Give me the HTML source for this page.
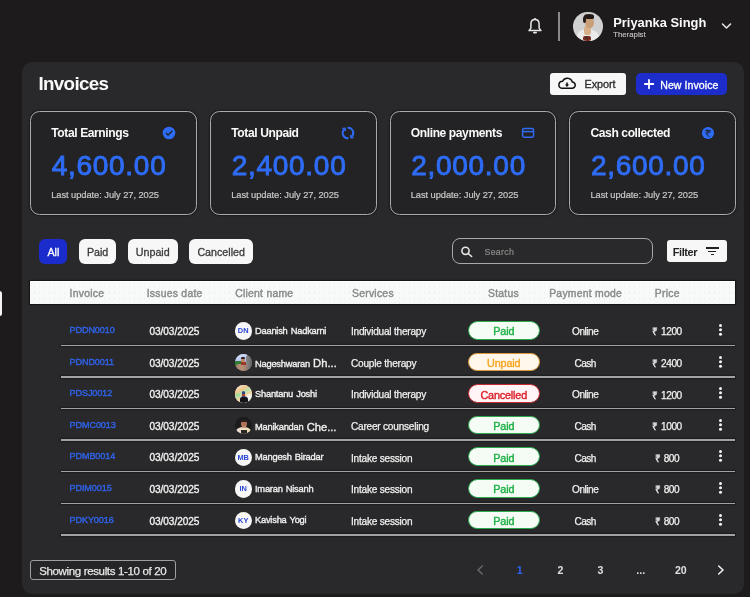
<!DOCTYPE html>
<html><head><meta charset="utf-8">
<style>
*{margin:0;padding:0;box-sizing:border-box}
html,body{width:750px;height:597px;overflow:hidden;background:#1d1b1c;font-family:"Liberation Sans",sans-serif;color:#fff}
#root{position:absolute;left:0;top:0;width:750px;height:597px;will-change:transform;background:#1d1b1c}
.a{position:absolute}
.t{position:absolute;white-space:nowrap;line-height:1}
#panel{left:22px;top:62px;width:722.2px;height:531.5px;background:#29282a;border-radius:10px}
.card{position:absolute;top:111.4px;width:166.5px;height:103.4px;border:1.8px solid #a9a9b2;border-radius:9.5px;background:#232224;box-shadow:0 0 1.5px 1px rgba(0,0,0,0.35)}
.ch{font-size:12.1px;font-weight:bold;letter-spacing:-0.42px;color:#fafafa;top:127.2px}
.cn{font-size:28px;letter-spacing:0.72px;color:#2e6cf6;top:151.8px;-webkit-text-stroke:0.9px #2e6cf6}
.cu{font-size:9.3px;letter-spacing:-0.05px;color:#c8c8c8;top:190.6px;-webkit-text-stroke:0.2px #c8c8c8}
.pill{position:absolute;height:25.3px;top:238.6px;border-radius:6px;background:#f7f7f7}
.pt{font-size:10.7px;letter-spacing:0px;color:#3a3a3a;top:246.6px;-webkit-text-stroke:0.3px currentColor}
.hd{position:absolute;top:281.2px;left:30.2px;width:705px;height:22.6px;background:radial-gradient(circle,#ebeff1 0.5px,transparent 0.9px) 2px 2.5px/5px 5.5px,#f8f9f9;border-top:1.2px solid #fff;box-shadow:0 0 1px 1px rgba(0,0,0,0.45)}
.hl{font-size:10.4px;letter-spacing:0.25px;color:#8a8a8a;top:288.8px;-webkit-text-stroke:0.42px #8a8a8a}
.row{position:absolute;left:60.5px;width:674.6px;height:1.4px;background:#a2a2a2;box-shadow:0 0 1.5px 1px rgba(0,0,0,0.3)}
.c{position:absolute;font-size:10.1px;white-space:nowrap;line-height:1;color:#f0f0f0;-webkit-text-stroke:0.25px #f0f0f0}
.id{color:#2f62e6;-webkit-text-stroke:0.4px #2f62e6}
.st{position:absolute;left:468px;width:71.5px;height:18.6px;border-radius:10px;border:1.1px solid}
.stt{position:absolute;font-size:10.8px;white-space:nowrap;line-height:1;-webkit-text-stroke:0.4px currentColor;letter-spacing:-0.15px}
.paid{background:#f5fcf6;border-color:#2aa84a}
.unpaid{background:#fff7ec;border-color:#d9983a}
.canc{background:#fff5f6;border-color:#c42a30}
.av{position:absolute;left:234.5px;width:17.4px;height:17.4px;border-radius:50%;background:#f7f7f7;color:#2a46d6;font-size:7.4px;font-weight:bold;text-align:center;line-height:17.4px;overflow:hidden}
.kb{position:absolute;left:718.8px;width:3px;height:3px;border-radius:50%;background:#f4f4f4;box-shadow:0 4.35px 0 #f4f4f4,0 8.7px 0 #f4f4f4}
.pg{position:absolute;top:564.8px;font-size:10.6px;color:#e0e0e0;font-weight:bold;line-height:1;white-space:nowrap}
</style></head><body><div id="root">
<!-- left sidebar nub -->
<div class="a" style="left:-3px;top:291px;width:5px;height:25px;background:#f4f4f4;border-radius:3px"></div>

<!-- top bar -->
<svg class="a" style="left:527px;top:17px" width="16" height="18" viewBox="0 0 16 18">
<path d="M8 2.6c-2.5 0-4.1 1.9-4.1 4.4v4.1L2 13.6h12l-1.9-2.5V7C12.1 4.5 10.5 2.6 8 2.6z" fill="none" stroke="#e8e8e8" stroke-width="1.5" stroke-linejoin="round"/>
<circle cx="8" cy="1.9" r="1" fill="#e8e8e8"/>
<path d="M6.8 15.6h2.4" stroke="#e8e8e8" stroke-width="1.6" stroke-linecap="round"/>
</svg>
<div class="a" style="left:558.2px;top:12.2px;width:1.6px;height:29px;background:#8a8a8a"></div>
<div class="a" style="left:573px;top:12.2px;width:29.5px;height:29.3px;border-radius:50%;background:radial-gradient(circle at 50% 45%,#d0d0d0 60%,#e2e2e2 100%);overflow:hidden">
  <div class="a" style="left:4px;top:16.5px;width:22px;height:15px;border-radius:45% 55% 0 0;background:#ebebeb"></div>
  <div class="a" style="left:11px;top:14px;width:6.5px;height:9px;border-radius:30% 30% 40% 40%;background:#d6b088"></div>
  <div class="a" style="left:12px;top:4.5px;width:8.5px;height:11px;border-radius:45% 45% 50% 50%;background:#c99f7a"></div>
  <div class="a" style="left:10.5px;top:2.2px;width:10px;height:4.8px;border-radius:50% 50% 20% 30%;background:#231a18"></div>
  <div class="a" style="left:10px;top:3.5px;width:3px;height:7.5px;border-radius:50%;background:#231a18"></div>
  <div class="a" style="left:10px;top:23.5px;width:7.5px;height:5.5px;border-radius:2px;background:#7a2a1e"></div>
  <div class="a" style="left:11.5px;top:24.5px;width:3px;height:2.5px;background:#2a3a2a;opacity:.6"></div>
</div>
<div class="t" style="left:613.2px;top:17.3px;font-size:12.9px;font-weight:bold;color:#fafafa">Priyanka Singh</div>
<div class="t" style="left:613.2px;top:30.6px;font-size:7.8px;color:#c2c2c2;-webkit-text-stroke:0.15px #c2c2c2">Therapist</div>
<svg class="a" style="left:721px;top:22px" width="11" height="8" viewBox="0 0 11 8"><path d="M1.5 2l4 4 4-4" fill="none" stroke="#e6e6e6" stroke-width="1.6" stroke-linecap="round" stroke-linejoin="round"/></svg>

<div id="panel" class="a"></div>
<div class="t" style="left:38.4px;top:74.6px;font-size:18.8px;font-weight:bold;letter-spacing:-0.65px;color:#fafafa">Invoices</div>

<!-- buttons -->
<div class="a" style="left:549.5px;top:72.7px;width:76px;height:22px;background:#f7f7f7;border-radius:3px"></div>
<svg class="a" style="left:557px;top:77px" width="20" height="14" viewBox="0 0 20 14">
<path d="M4.6 11.2H15A3.1 3.1 0 0 0 15.3 5A5.2 5.2 0 0 0 5.6 4.3A3.5 3.5 0 0 0 4.6 11.2Z" fill="none" stroke="#111" stroke-width="1.5" stroke-linejoin="round"/>
<path d="M10 5.6v2.6" stroke="#111" stroke-width="1.6"/>
<path d="M7.9 7.6h4.2L10 9.9z" fill="#111"/>
</svg>
<div class="t" style="left:584.5px;top:78.7px;font-size:10.9px;color:#2a2a2a;letter-spacing:-0.1px;-webkit-text-stroke:0.3px #2a2a2a">Export</div>
<div class="a" style="left:636px;top:72.9px;width:91px;height:22.1px;background:#1c2dcb;border-radius:5px"></div>
<svg class="a" style="left:643px;top:77.8px" width="12" height="12" viewBox="0 0 12 12"><path d="M6 1.9v8.4M1.9 6h8.4" stroke="#fff" stroke-width="1.8" stroke-linecap="round"/></svg>
<div class="t" style="left:660.2px;top:79.5px;font-size:10.6px;letter-spacing:0.05px;color:#fff;-webkit-text-stroke:0.3px #fff">New Invoice</div>

<!-- cards -->
<div class="card" style="left:30px"></div>
<div class="card" style="left:210px"></div>
<div class="card" style="left:389.8px"></div>
<div class="card" style="left:569.2px"></div>
<div class="t ch" style="left:51.3px">Total Earnings</div>
<div class="t cn" style="left:51.7px">4,600.00</div>
<div class="t cu" style="left:51.2px">Last update: July 27, 2025</div>
<div class="t ch" style="left:231.3px">Total Unpaid</div>
<div class="t cn" style="left:231.7px">2,400.00</div>
<div class="t cu" style="left:231.2px">Last update: July 27, 2025</div>
<div class="t ch" style="left:410.8px">Online payments</div>
<div class="t cn" style="left:411.2px">2,000.00</div>
<div class="t cu" style="left:410.7px">Last update: July 27, 2025</div>
<div class="t ch" style="left:590.5px">Cash collected</div>
<div class="t cn" style="left:590.9px">2,600.00</div>
<div class="t cu" style="left:590.4px">Last update: July 27, 2025</div>
<!-- card icons -->
<svg class="a" style="left:162px;top:126px" width="14" height="14" viewBox="0 0 14 14"><circle cx="7" cy="7" r="6.3" fill="#2e6cf6"/><path d="M4.2 7.2l1.9 1.9 3.8-3.8" fill="none" stroke="#1f1f1f" stroke-width="1.3" stroke-linecap="round" stroke-linejoin="round"/></svg>
<svg class="a" style="left:340.2px;top:125.2px" width="16" height="16" viewBox="0 0 16 16"><path d="M7.54 2.72A5.3 5.3 0 0 1 12.06 11.41M8.46 13.28A5.3 5.3 0 0 1 3.94 4.59" fill="none" stroke="#2e6cf6" stroke-width="1.9"/><path d="M13.59 12.7L10.53 10.12L10.65 13.09Z M2.41 3.3L5.47 5.88L5.35 2.91Z" fill="#2e6cf6" stroke="#2e6cf6" stroke-width="0.8" stroke-linejoin="round"/></svg>
<svg class="a" style="left:521px;top:127px" width="14" height="12" viewBox="0 0 14 12"><rect x="1.6" y="1.6" width="11" height="8.6" rx="1.6" fill="none" stroke="#2e6cf6" stroke-width="1.5"/><path d="M1.6 4.6h11" stroke="#2e6cf6" stroke-width="1.5"/></svg>
<svg class="a" style="left:701px;top:126px" width="14" height="14" viewBox="0 0 14 14"><circle cx="7" cy="7" r="6.1" fill="#2e6cf6"/><path d="M4.8 4.3h4.6M4.8 6h4.6M6 4.3c2.2 0 2.2 3.4 0 3.4h-.8l3 3" fill="none" stroke="#1f1f2a" stroke-width="1" stroke-linecap="round" stroke-linejoin="round"/></svg>

<!-- filter pills -->
<div class="pill" style="left:39.2px;width:28px;background:#1b2ccc"></div>
<div class="pill" style="left:78.5px;width:37.5px"></div>
<div class="pill" style="left:127.5px;width:50.2px"></div>
<div class="pill" style="left:189.1px;width:64px"></div>
<div class="t pt" style="left:47.4px;color:#fff">All</div>
<div class="t pt" style="left:86.9px">Paid</div>
<div class="t pt" style="left:135.8px">Unpaid</div>
<div class="t pt" style="left:197.4px">Cancelled</div>

<div class="a" style="left:452px;top:238.3px;width:201px;height:25.6px;border:1.7px solid #a8a8a8;border-radius:8px"></div>
<svg class="a" style="left:459px;top:244px" width="16" height="16" viewBox="0 0 16 16"><circle cx="6.5" cy="6.8" r="3.6" fill="none" stroke="#e6e6e6" stroke-width="1.6"/><path d="M9.2 9.5l3.4 3" stroke="#e6e6e6" stroke-width="1.6" stroke-linecap="round"/></svg>
<div class="t" style="left:484.5px;top:248.4px;font-size:8.8px;letter-spacing:0.3px;color:#8a8a8a;-webkit-text-stroke:0.2px #8a8a8a">Search</div>
<div class="a" style="left:667.3px;top:239.7px;width:59.7px;height:22.8px;background:#f7f7f7;border-radius:3px"></div>
<div class="t" style="left:672.8px;top:246.6px;font-size:10.9px;font-weight:bold;letter-spacing:-0.4px;color:#222">Filter</div>
<div class="a" style="left:705.9px;top:247.3px;width:13px;height:1.5px;background:#222"></div>
<div class="a" style="left:707.8px;top:250.5px;width:8.7px;height:1.5px;background:#222"></div>
<div class="a" style="left:710.7px;top:253.6px;width:3.2px;height:1.5px;background:#222"></div>

<!-- table header -->
<div class="hd"></div>
<div class="t hl" style="left:69.6px">Invoice</div>
<div class="t hl" style="left:146.7px">Issues date</div>
<div class="t hl" style="left:235.2px">Client name</div>
<div class="t hl" style="left:352px">Services</div>
<div class="t hl" style="left:488px">Status</div>
<div class="t hl" style="left:549.2px">Payment mode</div>
<div class="t hl" style="left:654.8px">Price</div>

<div id="rows"></div>
<div class="c id" style="left:69.5px;top:326.00px;font-size:9.1px;letter-spacing:-0.1px">PDDN0010</div>
<div class="c" style="left:149.4px;top:326.90px;letter-spacing:-0.05px;-webkit-text-stroke:0.35px #f0f0f0">03/03/2025</div>
<div class="av" style="top:322.20px">DN</div>
<div class="c" style="left:255px;top:326.60px;font-size:9.3px;letter-spacing:-0.22px;word-spacing:0.8px;-webkit-text-stroke:0.35px #f0f0f0">Daanish Nadkarni</div>
<div class="c" style="left:351px;top:327.10px;letter-spacing:-0.23px">Individual therapy</div>
<div class="st paid" style="top:321.00px"></div>
<div class="stt" style="left:503.75px;transform:translateX(-50%);top:326.40px;color:#1fb046">Paid</div>
<div class="c" style="left:585.2px;transform:translateX(-50%);top:327.10px;letter-spacing:-0.5px">Online</div>
<div class="c" style="left:667px;transform:translateX(-50%);top:327.30px;letter-spacing:-0.45px;word-spacing:1px">₹ 1200</div>
<div class="kb" style="top:324.00px"></div>
<div class="row" style="top:344.75px"></div>
<div class="c id" style="left:69.5px;top:357.60px;font-size:9.1px;letter-spacing:-0.1px">PDND0011</div>
<div class="c" style="left:149.4px;top:358.50px;letter-spacing:-0.05px;-webkit-text-stroke:0.35px #f0f0f0">03/03/2025</div>
<div class="av" style="top:353.80px;background:#7c7c7c"><div class="a" style="left:0;top:0;width:12px;height:8px;background:linear-gradient(160deg,#e4ecfc,#9cb0ec)"></div><div class="a" style="left:0;top:7px;width:7px;height:6px;background:#2f7a34"></div><div class="a" style="left:11px;top:2px;width:7px;height:16px;background:linear-gradient(90deg,#8a8a8a,#5e5e5e)"></div><div class="a" style="left:1.5px;top:10.5px;width:12px;height:8px;border-radius:3px 3px 0 0;background:linear-gradient(90deg,#a88470,#b98f74 50%,#8c7a70)"></div><div class="a" style="left:6.8px;top:4.2px;width:3.8px;height:5px;border-radius:40%;background:#c08a6c"></div><div class="a" style="left:6.4px;top:3.2px;width:4.4px;height:2.2px;border-radius:50% 50% 20% 20%;background:#231a18"></div><div class="a" style="left:6.5px;top:8.5px;width:4.5px;height:2.5px;background:#9a3a2a"></div></div>
<div class="c" style="left:255px;top:358.20px;font-size:9.3px;letter-spacing:-0.22px;word-spacing:0.8px;-webkit-text-stroke:0.35px #f0f0f0">Nageshwaran <span style="font-size:11.2px;letter-spacing:0;position:relative;top:0.3px">Dh...</span></div>
<div class="c" style="left:351px;top:358.70px;letter-spacing:-0.23px">Couple therapy</div>
<div class="st unpaid" style="top:352.60px"></div>
<div class="stt" style="left:503.75px;transform:translateX(-50%);top:358.00px;color:#f6a623">Unpaid</div>
<div class="c" style="left:585.2px;transform:translateX(-50%);top:358.70px;letter-spacing:-0.5px">Cash</div>
<div class="c" style="left:667px;transform:translateX(-50%);top:358.90px;letter-spacing:-0.45px;word-spacing:1px">₹ 2400</div>
<div class="kb" style="top:355.60px"></div>
<div class="row" style="top:376.31px"></div>
<div class="c id" style="left:69.5px;top:389.20px;font-size:9.1px;letter-spacing:-0.1px">PDSJ0012</div>
<div class="c" style="left:149.4px;top:390.10px;letter-spacing:-0.05px;-webkit-text-stroke:0.35px #f0f0f0">03/03/2025</div>
<div class="av" style="top:385.40px;background:#e8e0c8"><div class="a" style="left:0;top:0;width:18px;height:18px;background:linear-gradient(150deg,#f0f0f0 0%,#f2c88e 28%,#b8e2b0 45%,#f4d49e 58%,#eef4ee 75%,#a8dca8 100%)"></div><div class="a" style="left:7.3px;top:5.5px;width:3.6px;height:3.8px;border-radius:50%;background:#28448c"></div><div class="a" style="left:7.8px;top:8.8px;width:2.5px;height:3px;background:#b04030"></div><div class="a" style="left:5px;top:11.5px;width:8.5px;height:7px;border-radius:50% 50% 0 0;background:#141414;box-shadow:0 -0.7px 0 #2848a8"></div><div class="a" style="left:12px;top:9px;width:4px;height:4px;border-radius:50%;background:#f4f4f4;opacity:.8"></div><div class="a" style="left:1px;top:8px;width:4px;height:4px;border-radius:50%;background:#98d898;opacity:.8"></div></div>
<div class="c" style="left:255px;top:389.80px;font-size:9.3px;letter-spacing:-0.22px;word-spacing:0.8px;-webkit-text-stroke:0.35px #f0f0f0">Shantanu Joshi</div>
<div class="c" style="left:351px;top:390.30px;letter-spacing:-0.23px">Individual therapy</div>
<div class="st canc" style="top:384.20px"></div>
<div class="stt" style="left:503.75px;transform:translateX(-50%);top:389.60px;color:#dc1f2a">Cancelled</div>
<div class="c" style="left:585.2px;transform:translateX(-50%);top:390.30px;letter-spacing:-0.5px">Online</div>
<div class="c" style="left:667px;transform:translateX(-50%);top:390.50px;letter-spacing:-0.45px;word-spacing:1px">₹ 1200</div>
<div class="kb" style="top:387.20px"></div>
<div class="row" style="top:407.87px"></div>
<div class="c id" style="left:69.5px;top:420.80px;font-size:9.1px;letter-spacing:-0.1px">PDMC0013</div>
<div class="c" style="left:149.4px;top:421.70px;letter-spacing:-0.05px;-webkit-text-stroke:0.35px #f0f0f0">03/03/2025</div>
<div class="av" style="top:417.00px;background:#1c1b1c"><div class="a" style="left:1.5px;top:9.5px;width:15px;height:8px;border-radius:50% 50% 30% 30%;background:linear-gradient(90deg,#e8d8d0,#f0e0c0 60%,#e8d8a8)"></div><div class="a" style="left:6.5px;top:12.5px;width:6px;height:6px;background:#2a2826"></div><div class="a" style="left:6.5px;top:3px;width:5.5px;height:6.5px;border-radius:45%;background:#b07058"></div><div class="a" style="left:6.5px;top:2.5px;width:5.5px;height:2px;border-radius:50% 50% 0 0;background:#2a1a18"></div><div class="a" style="left:7.5px;top:8.5px;width:4px;height:2.5px;background:#c09078"></div></div>
<div class="c" style="left:255px;top:421.40px;font-size:9.3px;letter-spacing:-0.22px;word-spacing:0.8px;-webkit-text-stroke:0.35px #f0f0f0">Manikandan <span style="font-size:11.2px;letter-spacing:0;position:relative;top:0.3px">Che...</span></div>
<div class="c" style="left:351px;top:421.90px;letter-spacing:-0.23px">Career counseling</div>
<div class="st paid" style="top:415.80px"></div>
<div class="stt" style="left:503.75px;transform:translateX(-50%);top:421.20px;color:#1fb046">Paid</div>
<div class="c" style="left:585.2px;transform:translateX(-50%);top:421.90px;letter-spacing:-0.5px">Cash</div>
<div class="c" style="left:667px;transform:translateX(-50%);top:422.10px;letter-spacing:-0.45px;word-spacing:1px">₹ 1000</div>
<div class="kb" style="top:418.80px"></div>
<div class="row" style="top:439.43px"></div>
<div class="c id" style="left:69.5px;top:452.40px;font-size:9.1px;letter-spacing:-0.1px">PDMB0014</div>
<div class="c" style="left:149.4px;top:453.30px;letter-spacing:-0.05px;-webkit-text-stroke:0.35px #f0f0f0">03/03/2025</div>
<div class="av" style="top:448.60px">MB</div>
<div class="c" style="left:255px;top:453.00px;font-size:9.3px;letter-spacing:-0.22px;word-spacing:0.8px;-webkit-text-stroke:0.35px #f0f0f0">Mangesh Biradar</div>
<div class="c" style="left:351px;top:453.50px;letter-spacing:-0.23px">Intake session</div>
<div class="st paid" style="top:447.40px"></div>
<div class="stt" style="left:503.75px;transform:translateX(-50%);top:452.80px;color:#1fb046">Paid</div>
<div class="c" style="left:585.2px;transform:translateX(-50%);top:453.50px;letter-spacing:-0.5px">Cash</div>
<div class="c" style="left:667px;transform:translateX(-50%);top:453.70px;letter-spacing:-0.45px;word-spacing:1px">₹ 800</div>
<div class="kb" style="top:450.40px"></div>
<div class="row" style="top:470.99px"></div>
<div class="c id" style="left:69.5px;top:484.00px;font-size:9.1px;letter-spacing:-0.1px">PDIM0015</div>
<div class="c" style="left:149.4px;top:484.90px;letter-spacing:-0.05px;-webkit-text-stroke:0.35px #f0f0f0">03/03/2025</div>
<div class="av" style="top:480.20px">IN</div>
<div class="c" style="left:255px;top:484.60px;font-size:9.3px;letter-spacing:-0.22px;word-spacing:0.8px;-webkit-text-stroke:0.35px #f0f0f0">Imaran Nisanh</div>
<div class="c" style="left:351px;top:485.10px;letter-spacing:-0.23px">Intake session</div>
<div class="st paid" style="top:479.00px"></div>
<div class="stt" style="left:503.75px;transform:translateX(-50%);top:484.40px;color:#1fb046">Paid</div>
<div class="c" style="left:585.2px;transform:translateX(-50%);top:485.10px;letter-spacing:-0.5px">Online</div>
<div class="c" style="left:667px;transform:translateX(-50%);top:485.30px;letter-spacing:-0.45px;word-spacing:1px">₹ 800</div>
<div class="kb" style="top:482.00px"></div>
<div class="row" style="top:502.55px"></div>
<div class="c id" style="left:69.5px;top:515.60px;font-size:9.1px;letter-spacing:-0.1px">PDKY0016</div>
<div class="c" style="left:149.4px;top:516.50px;letter-spacing:-0.05px;-webkit-text-stroke:0.35px #f0f0f0">03/03/2025</div>
<div class="av" style="top:511.80px">KY</div>
<div class="c" style="left:255px;top:516.20px;font-size:9.3px;letter-spacing:-0.22px;word-spacing:0.8px;-webkit-text-stroke:0.35px #f0f0f0">Kavisha Yogi</div>
<div class="c" style="left:351px;top:516.70px;letter-spacing:-0.23px">Intake session</div>
<div class="st paid" style="top:510.60px"></div>
<div class="stt" style="left:503.75px;transform:translateX(-50%);top:516.00px;color:#1fb046">Paid</div>
<div class="c" style="left:585.2px;transform:translateX(-50%);top:516.70px;letter-spacing:-0.5px">Cash</div>
<div class="c" style="left:667px;transform:translateX(-50%);top:516.90px;letter-spacing:-0.45px;word-spacing:1px">₹ 800</div>
<div class="kb" style="top:513.60px"></div>
<div class="row" style="top:534.11px"></div>
<!-- footer -->
<div class="a" style="left:30px;top:560.3px;width:146px;height:19.7px;border:1.5px solid #9f9f9f;border-radius:3px;background:#252426"></div>
<div class="t" style="left:39.2px;top:565.6px;font-size:11.5px;letter-spacing:-0.35px;color:#e8e8e8;-webkit-text-stroke:0.25px #e8e8e8">Showing results 1-10 of 20</div>
<svg class="a" style="left:475px;top:564px" width="10" height="12" viewBox="0 0 10 12"><path d="M7.3 2 3 6l4.3 4" fill="none" stroke="#6a6a6a" stroke-width="1.5" stroke-linecap="round" stroke-linejoin="round"/></svg>
<div class="pg" style="left:519.8px;transform:translateX(-50%);color:#2c63f0">1</div>
<div class="pg" style="left:560.4px;transform:translateX(-50%)">2</div>
<div class="pg" style="left:600.4px;transform:translateX(-50%)">3</div>
<div class="pg" style="left:640.7px;transform:translateX(-50%)">...</div>
<div class="pg" style="left:680.8px;transform:translateX(-50%)">20</div>
<svg class="a" style="left:716px;top:564px" width="10" height="12" viewBox="0 0 10 12"><path d="M2.7 2 7 6l-4.3 4" fill="none" stroke="#f0f0f0" stroke-width="1.6" stroke-linecap="round" stroke-linejoin="round"/></svg>
</div></body></html>
